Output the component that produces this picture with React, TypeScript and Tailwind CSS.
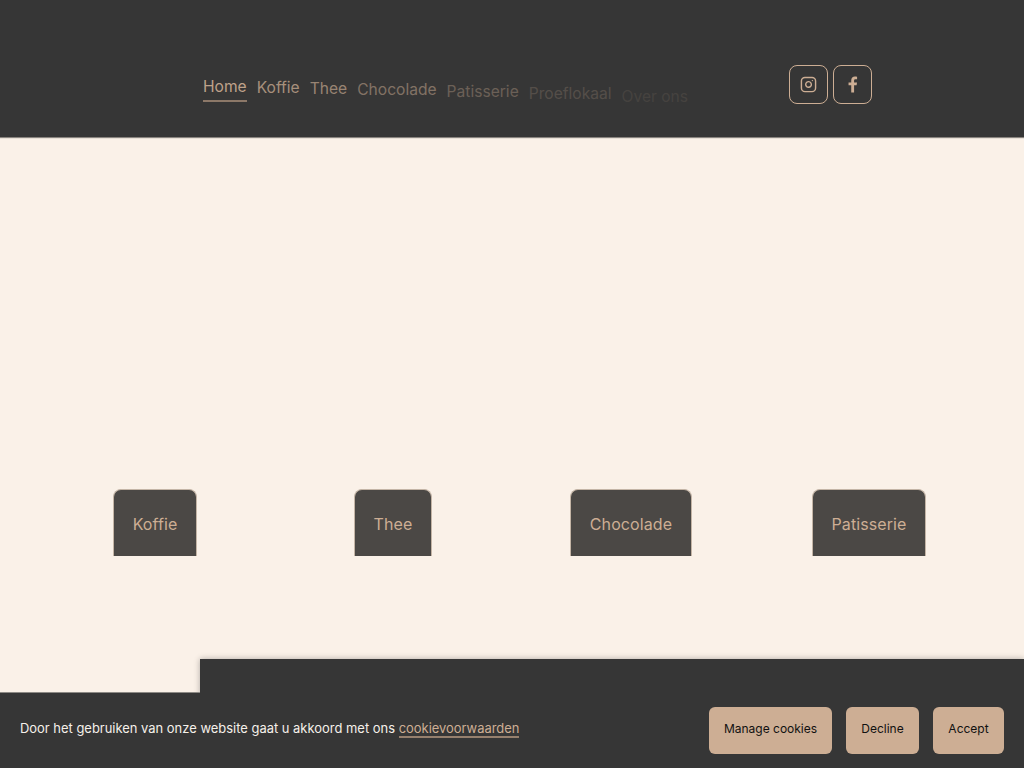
import { Instagram } from 'lucide-react';

const font = { fontFamily: 'Inter, "Noto Sans", sans-serif' };

const categories = ['Koffie', 'Thee', 'Chocolade', 'Patisserie'];

export default function App() {
  return (
    <div className="flex h-[768px] flex-col overflow-hidden bg-[#faf1e8]" style={font}>
      <header className="relative flex h-[137px] shrink-0 bg-[#363636] pl-[203px] shadow-[0_1px_1px_rgba(0,0,0,0.45)]">
        <nav className="flex gap-[10px] pt-[76px] text-[15.6px] leading-[24px] text-[#cdae94]">
          <a className="h-[27px] border-b-2 border-[#96806e] opacity-90 -translate-y-[1px]">Home</a>
          <a className="opacity-75">Koffie</a>
          <a className="opacity-65 translate-y-[1px]">Thee</a>
          <a className="opacity-50 translate-y-[2px]">Chocolade</a>
          <a className="opacity-35 translate-y-[4px]">Patisserie</a>
          <a className="opacity-20 translate-y-[6px]">Proeflokaal</a>
          <a className="opacity-10 translate-y-[9px]">Over ons</a>
        </nav>
        <div className="ml-[101px] flex gap-[5.5px] pt-[65px]">
          <a className="flex h-[38.5px] w-[38.5px] items-center justify-center rounded-[8px] border border-[#cdae94] text-[#cdae94]">
            <Instagram size={17} strokeWidth={2} />
          </a>
          <a className="flex h-[38.5px] w-[38.5px] items-center justify-center rounded-[8px] border border-[#cdae94] text-[#cdae94]">
            <svg width="19" height="19" viewBox="0 0 24 24" fill="currentColor">
              <path d="M14 22v-9h3.2l.5-3.6H14V7.2c0-1 .3-1.800 1.800-1.800h2V2.200c-.4 0-1.500-.2-2.800-.2C12.300 2 10.400 3.700 10.400 6.700v2.700H7V13h3.400v9z" />
            </svg>
          </a>
        </div>
      </header>

      <main className="grid flex-1 grid-cols-4 justify-items-center px-[36px] pt-[352px]">
        {categories.map((name) => (
          <a
            key={name}
            className="flex h-[67px] items-center rounded-t-[8px] border-x border-t border-[#c4b5a6] bg-[#4b4845] px-[18.500px] pt-[2px] text-[16px] tracking-[0.1px] text-[#cdae94]"
          >
            {name}
          </a>
        ))}
      </main>

      <footer className="ml-[200px] h-[109px] shrink-0 bg-[#363636] shadow-[0_0_6px_rgba(0,0,0,0.3)]" />

      <div className="fixed inset-x-0 bottom-0 flex h-[76px] items-center justify-between bg-[#363636] pl-[20px] pr-[20px]">
        <div className="absolute left-0 top-0 h-px w-[200px] bg-[#8d8a85]" />
        <p className="pb-[3px] text-[12.95px] text-[#f5f0ea]">
          Door het gebruiken van onze website gaat u akkoord met ons{' '}
          <a className="border-b-2 border-[#96806e] text-[#cdae94]">cookievoorwaarden</a>
        </p>
        <div className="flex gap-[14px]">
          <button className="h-[47px] w-[123px] rounded-[6px] bg-[#cdae94] pb-[2px] text-[12px] text-[#111]">Manage cookies</button>
          <button className="h-[47px] w-[73px] rounded-[6px] bg-[#cdae94] pb-[2px] text-[12px] text-[#111]">Decline</button>
          <button className="h-[47px] w-[71px] rounded-[6px] bg-[#cdae94] pb-[2px] text-[12px] text-[#111]">Accept</button>
        </div>
      </div>
    </div>
  );
}
